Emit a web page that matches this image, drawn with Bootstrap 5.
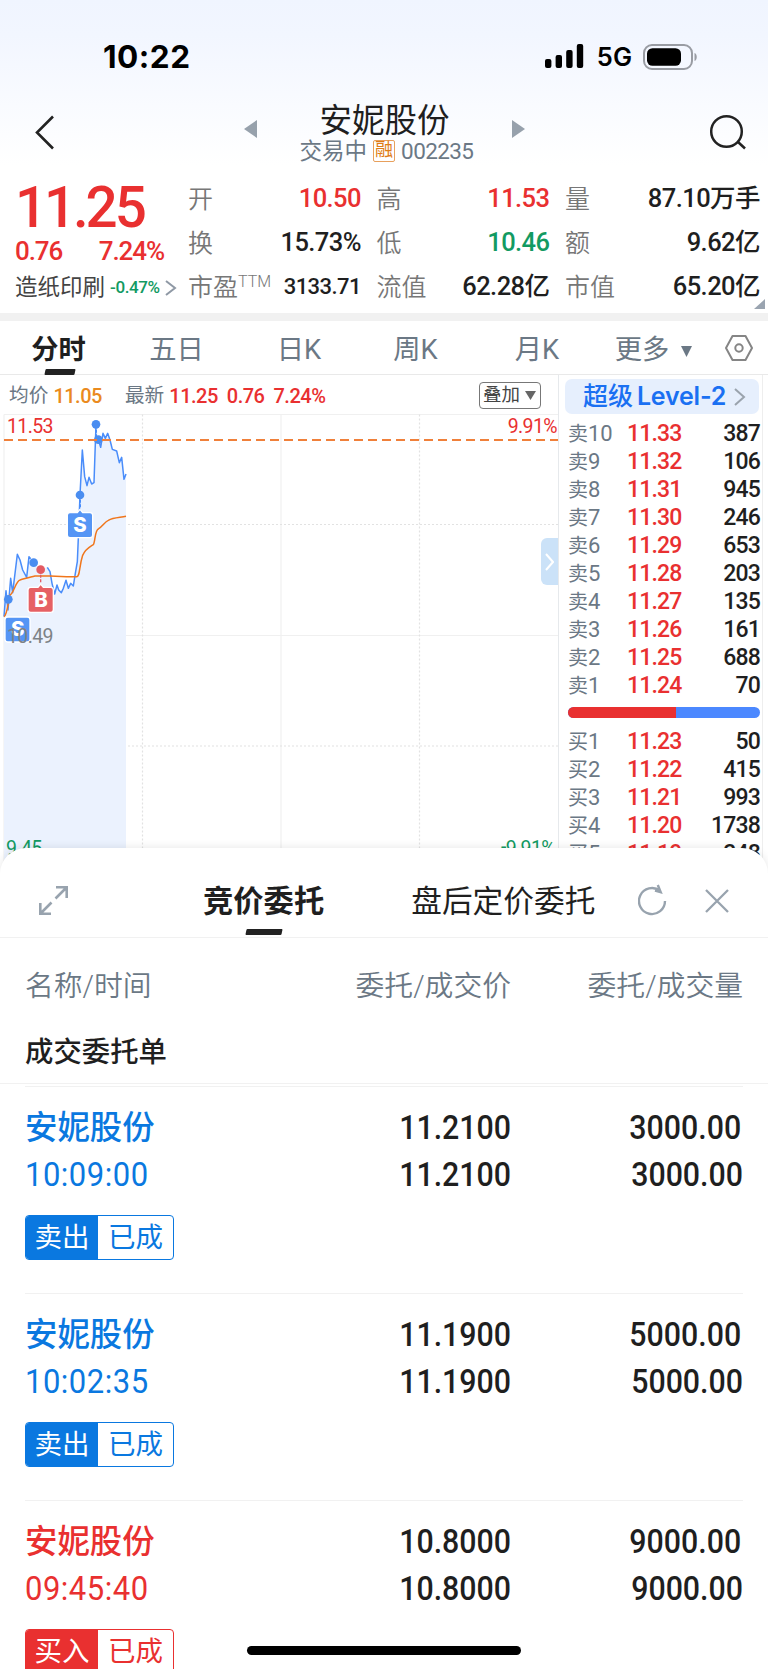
<!DOCTYPE html>
<html lang="zh-CN">
<head>
<meta charset="utf-8">
<meta name="viewport" content="width=device-width, initial-scale=1">
<title>安妮股份 002235</title>
<link rel="stylesheet" href="https://cdn.jsdelivr.net/npm/bootstrap@5.3.0/dist/css/bootstrap.min.css">
<style>
:root{--up:#e93030;--down:#129a62;--slate:#6b7885;--ink:#1f1f1f;--sell:#0a78e0}
body{width:768px;height:1669px;overflow:hidden;background:#fff;color:var(--ink);font-family:Roboto,"Noto Sans CJK SC",sans-serif;line-height:1}
.up{color:var(--up)}.down{color:var(--down)}.slate{color:var(--slate)}
.num{font-weight:500}
svg{display:block;flex:none}
.top-area{height:170px;background:linear-gradient(#f0f5ff 0,#f2f6ff 35px,#fff 165px)}
.status{height:90px;padding:23px 70px 0 103px;font-family:Inter,sans-serif;color:#000}
.clock{font-size:31.5px;font-weight:700;letter-spacing:.5px}
.net{font-size:25.5px;font-weight:600;margin:0 11px 0 13px}
.titlebar{height:80px;padding:0 22px 0 34px}
.stock{font-size:32.5px;line-height:36px}
.sub{font-size:22.5px;line-height:24px;gap:6px;padding-left:4px}
.code{font-size:22.5px;letter-spacing:-.6px}
.rong{width:22px;height:22px;border:1.5px solid #e8a05c;border-radius:2px;color:#e07c14;font-size:18px;line-height:18px}
.quote{height:143px;padding:7px 8px 0 15px}
.price{width:173px}
.big{font-size:56.5px;line-height:62px;height:57px;letter-spacing:-3.1px;padding-left:0}
.chg{font-size:26px;line-height:35px;letter-spacing:-1.1px;width:149px}
.ind{font-size:22.5px;line-height:37px;color:#444}
.ind .pct{font-size:17px;margin:0 5px 0 5px;letter-spacing:-.4px}
.qgrid{display:grid;grid-template-columns:173px 173px 195px;column-gap:15.5px;grid-auto-rows:44px}
.qgrid>div{font-size:25.5px}
.qgrid .lab{color:#777;font-weight:350;font-size:25px}
.qgrid .num{letter-spacing:-.55px}
.qgrid sup{font-size:16px;top:-9px;position:relative;vertical-align:baseline}
.corner{width:0;height:0;border-left:11px solid transparent;border-bottom:10px solid #9aa4b0;right:3px;bottom:4px}
.band{height:8px;background:#f1f1f1}
.periods{height:54px;border-bottom:1px solid #e9e9e9;display:grid;grid-template-columns:117px 119px 126px 107px 136px 98px 65px;font-size:27.3px;color:var(--slate);line-height:58px}
.dash{left:50%;transform:translateX(-50%) skewX(-12deg);height:6px;background:#222;border-radius:1px}
.market{height:499px;overflow:hidden}
.chartcol{width:559px;border-right:1px solid #e6e9ec}
.chead{height:37px;padding:4px 17px 0 9px;font-size:20px;letter-spacing:-.5px}
.chead .cj{font-size:19.7px;letter-spacing:0}
.overlay-btn{width:62px;height:27px;border:1.5px solid #777;border-radius:4px;color:#444;font-size:18.5px;letter-spacing:0}
.handle{left:541px;top:163px;width:17px;height:47px;background:#cbe2f8;border-radius:6px 0 0 6px}
.book{width:204px;border-right:1px solid #eee;padding:4px 2px 0 6px}
.lv2{height:35px;width:194px;background:#e6effd;border-radius:7px;color:#1a70f2;font-weight:500;font-size:25px;padding-left:5px}
.lv2 b{font-family:Inter,sans-serif;font-weight:600;font-size:25px;letter-spacing:-.2px;margin-left:4px}
.depth{height:28px;display:grid;grid-template-columns:59px 60px 1fr;padding-left:3px;line-height:28px}
.depth .num{letter-spacing:-.85px;font-size:23px}
.depth .slate{font-size:20px;white-space:nowrap}
.depth .slate i{font-style:normal;font-size:22px}
.ratio{height:11px;width:192px;margin:6.5px 0 10.5px 3px;border-radius:6px;overflow:hidden;background:#4b88ff}
.ratio div{background:var(--up)}
.sheet{height:821px;margin-top:-26px;border-radius:26px 26px 0 0;background:#fff;box-shadow:0 -1px 8px rgba(0,0,0,.09);overflow:hidden}
.sheetbar{height:90px;border-bottom:1px solid #f1f1f1;padding:12px 30px 0 38px}
.tabname{font-size:30.3px;line-height:83px;height:77px;white-space:nowrap}
.heads{height:97px;color:var(--slate);font-size:28.8px;font-weight:350;padding:0 25px 0 25px}
.cols{display:grid;grid-template-columns:236px 250px 1fr}
.group-title{height:49px;padding-left:25px;font-size:28.4px;font-weight:500;line-height:35px;border-bottom:1px solid #f1f1f1}
.order{height:207px;margin:0 25px;border-top:1px solid #f1f1f1;padding-top:17px}
.order:first-child{margin-top:2px}
.order .name{font-size:32.4px;font-weight:500;line-height:48px;height:47px}
.order .num,.order .time{font-size:33.5px;line-height:47px}
.order .num{transform:scaleX(.905);transform-origin:right}
.order .time{transform:scaleX(.925);transform-origin:left;letter-spacing:.55px}
.state{width:149px;height:45px;border:1.5px solid currentColor;border-radius:4px;margin-top:17px;font-size:27.5px;overflow:hidden}
.state .side{width:72px;background:currentColor}
.state .side span{color:#fff}
.selling{color:var(--sell)}.buying{color:var(--up)}
.home{left:247px;top:1646px;width:274px;height:9px;border-radius:5px;background:#000}
</style>
</head>
<body class="position-relative">
<header class="top-area">
  <div class="status d-flex align-items-center">
    <span class="clock me-auto">10:22</span>
    <svg width="39" height="25" viewBox="0 0 39 25"><rect x="0" y="15" width="6.4" height="9" rx="2"/><rect x="10.6" y="11" width="6.4" height="13" rx="2"/><rect x="21.2" y="6" width="6.4" height="18" rx="2"/><rect x="31.8" y="0" width="6.4" height="24" rx="2"/></svg>
    <span class="net">5G</span>
    <svg width="55" height="26" viewBox="0 0 55 26"><rect x="1" y="1" width="48" height="24" rx="8" fill="none" stroke="#999ca3" stroke-width="2"/><rect x="4" y="4.2" width="34" height="17.6" rx="5.5"/><path d="M51.5 9c3 1 3 7 0 8z" fill="#999ca3"/></svg>
  </div>
  <div class="titlebar d-flex justify-content-between">
    <svg class="mt-4" width="22" height="36" viewBox="0 0 22 36" fill="none" stroke="#222" stroke-width="2.6"><path d="M19 3 3 19l16 16" transform="translate(0 -.5)"/></svg>
    <div class="d-flex" style="margin-left:5px">
      <svg width="14" height="18" style="margin-top:30px" viewBox="0 0 14 18"><path d="M0 9 13 0v18z" fill="#97a1ac"/></svg>
      <div class="text-center" style="width:253px;padding-top:13px">
        <div class="stock">安妮股份</div>
        <div class="sub slate d-flex justify-content-center align-items-center"><span>交易中</span><span class="rong d-flex justify-content-center">融</span><span class="code">002235</span></div>
      </div>
      <svg width="14" height="18" style="margin-top:30px" viewBox="0 0 14 18"><path d="M14 9 1 0v18z" fill="#97a1ac"/></svg>
    </div>
    <svg style="margin-top:23px" width="38" height="38" viewBox="0 0 38 38" fill="none" stroke="#222" stroke-width="2.5"><circle cx="18.5" cy="18.5" r="15.3"/><path d="m29.5 28.5 7.5 7"/></svg>
  </div>
</header>

<section class="quote d-flex position-relative">
  <div class="price up">
    <div class="num big">11.25</div>
    <div class="num chg d-flex justify-content-between"><span>0.76</span><span>7.24%</span></div>
    <div class="ind d-flex align-items-center"><span>造纸印刷</span><span class="num down pct">-0.47%</span><svg width="12" height="18" viewBox="0 0 12 18" fill="none" stroke="#8f99a5" stroke-width="2"><path d="m1 2 9 7-9 7"/></svg></div>
  </div>
  <div class="qgrid">
    <div class="d-flex justify-content-between align-items-center"><span class="lab">开</span><span class="num up">10.50</span></div>
    <div class="d-flex justify-content-between align-items-center"><span class="lab">高</span><span class="num up">11.53</span></div>
    <div class="d-flex justify-content-between align-items-center"><span class="lab">量</span><span class="num">87.10万手</span></div>
    <div class="d-flex justify-content-between align-items-center"><span class="lab">换</span><span class="num">15.73%</span></div>
    <div class="d-flex justify-content-between align-items-center"><span class="lab">低</span><span class="num down">10.46</span></div>
    <div class="d-flex justify-content-between align-items-center"><span class="lab">额</span><span class="num">9.62亿</span></div>
    <div class="d-flex justify-content-between align-items-center"><span class="lab">市盈<sup>TTM</sup></span><span class="num" style="font-size:22px">3133.71</span></div>
    <div class="d-flex justify-content-between align-items-center"><span class="lab">流值</span><span class="num">62.28亿</span></div>
    <div class="d-flex justify-content-between align-items-center"><span class="lab">市值</span><span class="num">65.20亿</span></div>
  </div>
  <i class="corner position-absolute"></i>
</section>
<div class="band"></div>

<nav class="periods text-center">
  <span class="position-relative fw-bold" style="color:#1f1f1f">分时<i class="dash position-absolute" style="width:30px;top:48px;margin-left:1px"></i></span>
  <span>五日</span><span>日K</span><span>周K</span><span>月K</span>
  <span class="d-flex align-items-center justify-content-center gap-2">更多<svg width="13" height="12" viewBox="0 0 13 12" style="margin:4px 0 0 3px"><path d="M1 0h11L6.5 11z" fill="#6b7885"/></svg></span>
  <span class="d-flex align-items-center justify-content-center"><svg width="30" height="28" viewBox="0 0 30 28" fill="none" stroke="#858585" stroke-width="2" stroke-linejoin="round" style="margin:-5px 0 0 6px"><path d="M8.5 2h13l6.5 12-6.5 12h-13L2 14z"/><circle cx="15" cy="14" r="3.7"/></svg></span>
</nav>

<section class="market d-flex">
  <div class="chartcol position-relative">
    <div class="chead d-flex align-items-center">
      <span class="cj slate">均价</span><span class="num" style="color:#ea8a1e;margin-left:5px">11.05</span>
      <span class="cj slate" style="margin-left:23px">最新</span><span class="num up" style="margin-left:5px">11.25</span><span class="num up" style="margin-left:9px">0.76</span><span class="num up" style="margin-left:9px">7.24%</span>
      <span class="overlay-btn d-flex align-items-center justify-content-center ms-auto gap-1">叠加<svg width="13" height="10" viewBox="0 0 13 10"><path d="M1 0h11L6.5 9z" fill="#666"/></svg></span>
    </div>
    <svg width="558" height="462" viewBox="0 412 558 462" font-size="19.5" letter-spacing="-.6">
      <g fill="none" stroke="#f0f0f0" stroke-width="1.2">
        <path d="M4 414.5h554M4 414.5v447M4 635.5h554M281 414.5v447"/>
        <path d="M4 524.5h554M4 746h554M142.5 414.5v447M419.5 414.5v447" stroke="#e2e2e2" stroke-dasharray="2 2"/>
      </g>
      <g transform="translate(0 370) scale(.33333)" stroke-linejoin="round">
        <path fill="#ebf2fe" d="M12 740 18 662 24 720 32 625 38 668 52 553 60 570 68 600 80 622 87 560 100 578 122 598 142 592 150 605 156 640 164 672 171 645 184 668 198 631 205 655 212 640 220 648 226 610 232 575 236 480 240 375 247 240 254 320 261 347 267 322 275 342 282 338 285 250 288 165 295 208 302 232 309 190 316 205 323 190 330 210 337 238 350 243 358 278 365 262 372 328 378 312V1472H12z"/>
        <path d="M12 740 18 662 24 720 32 625 38 668 52 553 60 570 68 600 80 622 87 560 92 566M142 592 150 605 156 640 164 672 171 645 176 660 184 668 190 655 198 631 205 655 212 640 220 648 226 610 232 575 236 480 240 375 247 240 254 320 261 347 267 322 275 342 282 338 285 250 288 165M295 208 302 232 309 190 316 205 323 190 330 210 337 238 350 243 358 278 365 262 372 328 378 312" fill="none" stroke="#4a8dfa" stroke-width="4.5"/>
        <path d="M12 740C22 735 24 695 30 675 42 668 48 632 60 630 75 626 90 621 105 618H150L200 620H230C240 620 237 590 248 556 258 535 268 532 280 524 286 515 284 480 296 476 308 468 315 455 325 451 340 443 360 443 378 439" fill="none" stroke="#f0761c" stroke-width="4.5"/>
        <path d="M288 165v40M240 375v55" stroke="#4a8dfa" stroke-width="6" stroke-dasharray="9 5"/>
        <path d="M122 600v55" stroke="#e45a62" stroke-width="4" stroke-dasharray="9 5"/>
        <g fill="#4a8df0"><circle cx="25" cy="688" r="13"/><circle cx="101" cy="578" r="13"/><circle cx="240" cy="375" r="13"/><circle cx="288" cy="163" r="13"/><circle cx="295" cy="209" r="13"/></g>
        <circle cx="122" cy="599" r="13" fill="#e45a62"/>
        <g stroke="#fff" stroke-width="4"><path fill="#5595f5" d="M232 428l8-10 8 10h22q8 0 8 8v59q0 8-8 8h-60q-8 0-8-8v-59q0-8 8-8z"/><path fill="#e66064" d="M114 652l8-10 8 10h22q8 0 8 8v59q0 8-8 8H92q-8 0-8-8v-59q0-8 8-8z"/><rect x="15" y="741" width="75" height="75" rx="8" fill="#5595f5"/></g>
        <g fill="#fff" font-family="Inter,sans-serif" font-weight="800" font-size="61" text-anchor="middle" letter-spacing="0"><text x="240" y="485">S</text><text x="123" y="710">B</text><text x="53" y="797">S</text></g>
      </g>
      <path d="M4 440h554" stroke="#f0803a" stroke-width="2" stroke-dasharray="9 5"/>
      <text x="7" y="432.5" fill="#e93030">11.53</text><text x="557" y="432.5" fill="#e93030" text-anchor="end">9.91%</text>
      <text x="7" y="642.5" fill="#7d8286">10.49</text>
      <text x="6" y="855" fill="#129a62">9.45</text><text x="555" y="855" fill="#129a62" text-anchor="end"><tspan dy="-2">-</tspan><tspan dy="2">9.91%</tspan></text>
    </svg>
    <div class="handle position-absolute d-flex align-items-center justify-content-center"><svg width="9" height="18" viewBox="0 0 9 18" fill="none" stroke="#fff" stroke-width="2"><path d="m1 1 7 8-7 8"/></svg></div>
  </div>
  <div class="book">
    <div class="lv2 d-flex align-items-center justify-content-center">超级<b>Level-2</b><svg class="ms-2" width="12" height="18" viewBox="0 0 12 18" fill="none" stroke="#9aa3ad" stroke-width="2"><path d="m1 1 9 8-9 8"/></svg></div>
    <div id="asks" style="padding-top:6px"></div>
    <div class="ratio d-flex"><div style="width:56.5%"></div></div>
    <div id="bids"></div>
  </div>
</section>

<section class="sheet position-relative">
  <div class="sheetbar d-flex">
    <svg width="31" height="31" viewBox="0 0 31 31" fill="none" stroke="#98a3ae" stroke-width="2.6" style="margin-top:25px"><path d="M17.5 13.5 29 2M18 2.3h10.7V13M13.5 17.5 2 29M2.3 18v10.7H13"/></svg>
    <span class="tabname fw-bold position-relative" style="margin-left:134px">竞价委托<i class="dash position-absolute" style="width:36px;top:69px"></i></span>
    <span class="tabname" style="margin-left:87px;font-size:30.7px">盘后定价委托</span>
    <svg width="30" height="34" viewBox="0 0 30 34" fill="none" stroke="#98a3ae" stroke-width="2.4" style="margin:24px 0 0 43px"><path d="M27 17A13 13 0 1 1 22 6.8M19.8 1l2.9 7.2L17 6.5"/></svg>
    <svg width="26" height="26" viewBox="0 0 26 26" fill="none" stroke="#98a3ae" stroke-width="2.3" style="margin:28px 0 0 36px"><path d="m2 2 22 22M24 2 2 24"/></svg>
  </div>
  <div class="heads cols align-items-center"><span>名称/时间</span><span class="text-end">委托/成交价</span><span class="text-end">委托/成交量</span></div>
  <div class="group-title">成交委托单</div>
  <div id="orders"></div>
</section>
<div class="home position-absolute"></div>

<script>
const level = (side, n, price, volume) => `<div class="depth"><span class="slate">${side}<i>${n}</i></span><span class="num up">${price}</span><span class="num text-end">${volume}</span></div>`;
const asks = [387,106,945,246,653,203,135,161,688,70];
const bids = [50,415,993,1738,248];
document.getElementById('asks').innerHTML = asks.map((v,i) => level('卖', 10-i, (11.33-i*.01).toFixed(2), v)).join('');
document.getElementById('bids').innerHTML = bids.map((v,i) => level('买', i+1, (11.23-i*.01).toFixed(2), v)).join('');
const orders = [
  ['selling','10:09:00','11.2100','3000.00','卖出'],
  ['selling','10:02:35','11.1900','5000.00','卖出'],
  ['buying','09:45:40','10.8000','9000.00','买入']
];
document.getElementById('orders').innerHTML = orders.map(([kind,time,price,qty,side]) => `
  <article class="order">
    <div class="cols"><span class="name ${kind}">安妮股份</span><span class="num text-end">${price}</span><span class="num text-end" style="padding-right:2px">${qty}</span></div>
    <div class="cols"><span class="time ${kind}">${time}</span><span class="num text-end">${price}</span><span class="num text-end">${qty}</span></div>
    <div class="state d-flex ${kind}"><div class="side d-flex align-items-center justify-content-center"><span>${side}</span></div><div class="flex-fill d-flex align-items-center justify-content-center">已成</div></div>
  </article>`).join('');
</script>
<script src="https://cdn.jsdelivr.net/npm/bootstrap@5.3.0/dist/js/bootstrap.bundle.min.js"></script>
</body>
</html>
